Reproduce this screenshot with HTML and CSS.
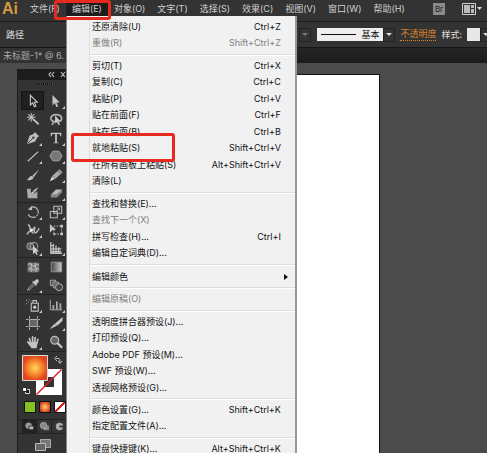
FILE: index.html
```
<!DOCTYPE html>
<html lang="zh-CN">

<head>
    <meta charset="UTF-8">
    <meta name="viewport" content="width=device-width, initial-scale=1.0">
    <title>Ai</title>
    <link rel="stylesheet" href="styles.css">
</head>

<body>
<div class="app">
    <!-- 菜单栏 -->
    <header class="menubar">
        <span class="logo">Ai</span>
        <nav class="nav">
            <button>文件(F)</button>
            <div class="nav_open">
                <button class="active">编辑(E)</button>
                <div class="menu">
                    <ul>
                        <li><button>还原清除(U)<kbd>Ctrl+Z</kbd></button></li>
                        <li><button disabled>重做(R)<kbd>Shift+Ctrl+Z</kbd></button></li>
                    </ul>
                    <ul>
                        <li><button>剪切(T)<kbd>Ctrl+X</kbd></button></li>
                        <li><button>复制(C)<kbd>Ctrl+C</kbd></button></li>
                        <li><button>粘贴(P)<kbd>Ctrl+V</kbd></button></li>
                        <li><button>贴在前面(F)<kbd>Ctrl+F</kbd></button></li>
                        <li><button>贴在后面(B)<kbd>Ctrl+B</kbd></button></li>
                        <li class="marked"><button>就地粘贴(S)<kbd>Shift+Ctrl+V</kbd></button></li>
                        <li><button>在所有画板上粘贴(S)<kbd>Alt+Shift+Ctrl+V</kbd></button></li>
                        <li><button>清除(L)</button></li>
                    </ul>
                    <ul>
                        <li><button>查找和替换(E)...</button></li>
                        <li><button disabled>查找下一个(X)</button></li>
                        <li><button>拼写检查(H)...<kbd>Ctrl+I</kbd></button></li>
                        <li><button>编辑自定词典(D)...</button></li>
                    </ul>
                    <ul>
                        <li><button class="sub">编辑颜色</button></li>
                    </ul>
                    <ul>
                        <li><button disabled>编辑原稿(O)</button></li>
                    </ul>
                    <ul>
                        <li><button>透明度拼合器预设(J)...</button></li>
                        <li><button>打印预设(Q)...</button></li>
                        <li><button>Adobe PDF 预设(M)...</button></li>
                        <li><button>SWF 预设(W)...</button></li>
                        <li><button>透视网格预设(G)...</button></li>
                    </ul>
                    <ul>
                        <li><button>颜色设置(G)...<kbd>Shift+Ctrl+K</kbd></button></li>
                        <li><button>指定配置文件(A)...</button></li>
                    </ul>
                    <ul>
                        <li><button>键盘快捷键(K)...<kbd>Alt+Shift+Ctrl+K</kbd></button></li>
                    </ul>
                </div>
            </div>
            <button>对象(O)</button>
            <button>文字(T)</button>
            <button>选择(S)</button>
            <button>效果(C)</button>
            <button>视图(V)</button>
            <button>窗口(W)</button>
            <button>帮助(H)</button>
        </nav>
        <div class="bar_right">
            <button class="bridge">Br</button>
            <button class="layout" aria-label="排列文档">
                <svg width="20" height="13" viewBox="0 0 20 13"><path fill="none" stroke="#d0d0d0" d="M.5.5h13v11H.5z"/><path fill="#bbb" d="M2 2h6v8H2zM9 2h3v3H9zM9 6h3v4H9z"/><path fill="#ddd" d="M15 4h5l-2.500 3z"/></svg>
            </button>
        </div>
    </header>

    <!-- 控制栏 -->
    <div class="options">
        <span class="path">路径</span>
        <div class="options_right">
            <button class="arrow dim" aria-label="变量宽度"></button>
            <button class="brush"><i></i>基本</button>
            <button class="arrow" aria-label="画笔"></button>
            <a href="#" class="opacity">不透明度</a>
            <span class="style_name">样式:</span>
            <button class="swatch" aria-label="样式"></button>
            <button class="arrow" aria-label="样式列表"></button>
        </div>
    </div>

    <div class="tabs">
        <div class="tab">未标题-1* @ 6.</div>
    </div>

    <main class="canvas">
        <aside class="tools">
            <div class="tools_head">
                <svg width="18" height="7" viewBox="0 0 18 7"><path fill="none" stroke="#bbb" stroke-width="1.200" d="M3 1L1 3.500 3 6M6 1L4 3.500 6 6M13 1l4 5M17 1l-4 5"/></svg>
            </div>
            <div class="grip"></div>
            <div class="group tall">
                <button class="on" aria-label="选择"><svg viewBox="0 0 16 16"><path fill="#222" stroke="#c8c8c8" stroke-width="1.200" d="M5 1.500v11l2.600-2.400 2 4.400 1.800-.8-2-4.200h3.600z"/></svg></button>
                <button class="more" aria-label="直接选择"><svg viewBox="0 0 16 16"><path fill="#c4c4c4" d="M4 1v12l2.700-2.600L8.500 15l2-.9-1.900-4.300h3.700z"/></svg></button>
                <button aria-label="魔棒"><svg viewBox="0 0 16 16"><path fill="none" stroke="#bdbdbd" stroke-width="1.200" d="M6 1v10M1 6h10M2.500 2.500l7 7M9.500 2.500l-7 7"/><path stroke="#bdbdbd" stroke-width="2" d="M8 8l6.500 6"/></svg></button>
                <button aria-label="套索"><svg viewBox="0 0 16 16"><path fill="none" stroke="#b0b0b0" stroke-width="2" d="M9 11C0 12 0 3 8 3s8 7 3 8M4 10c2 1 1 4-1 4"/><path fill="#ccc" d="M7 4v9l2-2 2 4 1.500-1-2-3.500H13z"/></svg></button>
                <button class="more" aria-label="钢笔"><svg viewBox="0 0 16 16"><path fill="#bdbdbd" d="M10 1l5 5-2 1-2.500 5L1 15l3-9.500L9 3z"/><path stroke="#333" d="M1.500 14.500L8 8"/><circle cx="8.500" cy="7.500" r="1.300" fill="#333"/></svg></button>
                <button class="more" aria-label="文字"><svg viewBox="0 0 16 16"><path fill="#c4c4c4" d="M2 2h12v4h-1l-1-2.500H9V13l2 .5V14H5v-.5l2-.5V3.500H4L3 6H2z"/></svg></button>
                <button class="more" aria-label="直线段"><svg viewBox="0 0 16 16"><path stroke="#c4c4c4" stroke-width="1.300" d="M2 14L14 3"/></svg></button>
                <button class="more" aria-label="多边形"><svg viewBox="0 0 16 16"><path fill="#777" stroke="#aaa" d="M4.500 2.500h7L15 8l-3.500 5.500h-7L1 8z"/></svg></button>
                <button aria-label="画笔"><svg viewBox="0 0 16 16"><path fill="#bdbdbd" d="M15 1.500L9 10.500 7 9zM6.500 9l2.300 1.900C7 14.500 4 14 .5 14c2-.5 2.500-4.500 6-5z"/></svg></button>
                <button class="more" aria-label="铅笔"><svg viewBox="0 0 16 16"><path fill="#aaa" d="M12 1.500L15.500 5 7 12.500 3.500 9z"/><path fill="#ddd" d="M3.500 9.500l3 3L1 15z"/><path stroke="#444" d="M10.500 3l3.500 3.500"/></svg></button>
                <button aria-label="斑点画笔"><svg viewBox="0 0 16 16"><path fill="#aaa" d="M1 3h5c-2 3 0 6 4 5l3-2v8H2z"/><path fill="#ccc" d="M14.500 1L10 7 8 5.500zM7.500 6l2 1.500C8 9 7 8.500 5.500 9z"/></svg></button>
                <button class="more" aria-label="橡皮擦"><svg viewBox="0 0 16 16"><path fill="#bbb" d="M8 4h7l-6 6H2z"/><path fill="#888" d="M2 10h7v3H2zM9 10l6-6v3l-6 6z"/></svg></button>
            </div>
            <div class="group">
                <button class="more" aria-label="旋转"><svg viewBox="0 0 16 16"><path fill="none" stroke="#bdbdbd" stroke-width="1.300" stroke-dasharray="14 1 2 1" d="M5 3a6 6 0 1 1-2.500 7.500"/><path fill="#bdbdbd" d="M2 5l5-4v5z"/></svg></button>
                <button class="more" aria-label="缩放"><svg viewBox="0 0 16 16"><path fill="none" stroke="#bdbdbd" stroke-width="1.200" d="M5.500 1.500h9v8h-9zM1.500 7.500h8v7h-8z"/><path stroke="#bdbdbd" fill="none" d="M7 8l5-4M9 3.500h3v3"/></svg></button>
                <button class="more" aria-label="宽度"><svg viewBox="0 0 16 16"><path fill="none" stroke="#b4b4b4" stroke-width="1.800" d="M2 2c4 0 1 5 4 6s3-4 4-3-2 5 0 6 4-3 5-5M1 13c3-5 6-4 7-1"/><circle cx="6" cy="8" r="1.800" fill="#eee"/></svg></button>
                <button aria-label="自由变换"><svg viewBox="0 0 16 16"><path fill="none" stroke="#bdbdbd" stroke-dasharray="2 1" d="M5.500 3.500h9v9h-9z"/><path fill="#c4c4c4" d="M1 1v10l3-3h4zM13 2h3v3h-3zM13 11h3v3h-3zM5 12h2v2H5z"/></svg></button>
                <button class="more" aria-label="形状生成器"><svg viewBox="0 0 16 16"><circle cx="5" cy="6" r="4" fill="#555" stroke="#b4b4b4"/><circle cx="9" cy="6" r="4.500" fill="none" stroke="#b4b4b4"/><path fill="#ccc" d="M8 5v10l2.300-2 1.500 3 1.500-1-1.500-3H15z"/></svg></button>
                <button class="more" aria-label="透视网格"><svg viewBox="0 0 16 16"><path fill="none" stroke="#bdbdbd" stroke-width="1.500" d="M2 1v13h13M5 3v11M8 5v9M11 7v7M2 5l4 1M2 9h12M2 12h12"/></svg></button>
            </div>
            <div class="group">
                <button aria-label="网格"><svg viewBox="0 0 16 16"><path fill="#777" d="M2 3h13v11H2z"/><path fill="none" stroke="#ccc" d="M2 5c4-3 5 4 8 2s3-3 5-1M2 11c3-4 6 2 8 0s3-2 5 0M5 3c4 3-2 8 2 11M11 3c-3 4 3 7 0 11"/></svg></button>
                <button aria-label="渐变"><svg viewBox="0 0 16 16"><defs><linearGradient id="gray"><stop stop-color="#444"/><stop offset="1" stop-color="#ccc"/></linearGradient></defs><path fill="url(#gray)" stroke="#999" d="M2.500 2.500h12v11h-12z"/></svg></button>
                <button class="more" aria-label="吸管"><svg viewBox="0 0 16 16"><path fill="#c4c4c4" d="M11 2c2-2 5 1 3 3l-2 2 .5 1-1 1L7 4.500l1-1 1 .5z"/><path fill="none" stroke="#bdbdbd" d="M8.500 6L3 11.500 2 14l2.500-1L10 7.500"/></svg></button>
                <button aria-label="混合"><svg viewBox="0 0 16 16"><path fill="#555" stroke="#aaa" d="M1.500 2.500h6v6h-6z"/><rect x="4.500" y="4.500" width="7" height="7" rx="2" fill="#666" stroke="#aaa"/><circle cx="11.500" cy="10.500" r="4" fill="#444" stroke="#bbb"/></svg></button>
            </div>
            <div class="group tall">
                <button class="more" aria-label="符号喷枪"><svg viewBox="0 0 16 16"><path fill="none" stroke="#bdbdbd" stroke-width="1.300" d="M6 6h8v9H6zM8 6V3h4v3"/><circle cx="10" cy="10.500" r="1.800" fill="#ccc"/><path fill="#bbb" d="M0 2h1v1H0zM3 1h1v1H3zM2 4h1v1H2zM5 3h1v1H5zM0 6h1v1H0z"/></svg></button>
                <button class="more" aria-label="柱形图"><svg viewBox="0 0 16 16"><path fill="none" stroke="#bdbdbd" d="M1.500 2v11.500H15"/><path fill="#aaa" d="M4 8h2v5H4zM8 4h2v9H8zM12 6h2v7h-2z"/></svg></button>
                <button aria-label="画板"><svg viewBox="0 0 16 16"><path fill="#666" d="M4 4h9v8H4z"/><path fill="none" stroke="#bdbdbd" d="M4 4h9v8H4zM4 0v3M13 0v3M4 13v3M13 13v3M0 4h3M14 4h2M0 12h3M14 12h2"/></svg></button>
                <button class="more" aria-label="切片"><svg viewBox="0 0 16 16"><path fill="#c4c4c4" d="M15.500 1v4.500L9.500 11 7 8.500zM6.500 8.500l2.500 2.500L.5 15z"/></svg></button>
                <button class="more" aria-label="抓手"><svg viewBox="0 0 16 16"><path fill="none" stroke="#c4c4c4" stroke-width="1.900" stroke-linecap="round" d="M5 9L4 4M7.500 8V2M10 8l.5-5M12.500 9l1-4M5 12L2 8"/><path fill="#c4c4c4" d="M4 8h9.500L12 15H6z"/></svg></button>
                <button aria-label="缩放镜"><svg viewBox="0 0 16 16"><circle cx="6.500" cy="6" r="4.500" fill="#666" stroke="#bbb" stroke-width="1.500"/><path stroke="#c4c4c4" stroke-width="2.500" d="M9.500 9l5.500 5.500"/></svg></button>
            </div>
            <div class="paint">
                <svg width="46" height="42" viewBox="0 0 46 42">
                    <defs>
                        <radialGradient id="fill"><stop stop-color="#ffd75e"/><stop offset=".55" stop-color="#f58a2c"/><stop offset="1" stop-color="#e3431d"/></radialGradient>
                    </defs>
                    <path fill="#fff" fill-rule="evenodd" d="M14 14h26v26H14zM22 22v10h10V22z"/>
                    <path stroke="#d8202a" stroke-width="1.500" d="M14.500 39.500l25-25"/>
                    <path fill="url(#fill)" stroke="#ddd" d="M.5.5h25v25H.5z"/>
                    <path fill="none" stroke="#bbb" d="M34 3.500h3q1 0 1 4M35 1l-2.500 2.500L35 6M36 6l2 2.500L40 6"/>
                    <path fill="#111" stroke="#ddd" d="M3.500 34.500h4v4h-4z"/><path fill="#fff" stroke="#222" d="M.5 32.500h4v4h-4z"/>
                </svg>
            </div>
            <div class="modes">
                <button class="color" aria-label="颜色"></button>
                <button class="gradient" aria-label="渐变"></button>
                <button class="none" aria-label="无"></button>
            </div>
            <div class="draws">
                <button class="on" aria-label="正常绘图"><svg viewBox="0 0 12 12"><circle cx="5" cy="5" r="3.500" fill="#999"/><path fill="#bbb" stroke="#333" d="M5.500 5.500h5v4h-5z"/></svg></button>
                <button aria-label="背面绘图"><svg viewBox="0 0 12 12"><path fill="#888" d="M5 5h6v5H5z"/><circle cx="5" cy="5" r="3.500" fill="#888" stroke="#aaa"/></svg></button>
                <button aria-label="内部绘图"><svg viewBox="0 0 12 12"><circle cx="6" cy="6" r="4" fill="#aaa"/><path fill="#333" d="M6 5h4v2H6z"/></svg></button>
            </div>
            <button class="screen" aria-label="更改屏幕模式">
                <svg width="18" height="14" viewBox="0 0 18 14"><path fill="#777" stroke="#aaa" d="M6.500 1.500h10v8h-10z"/><path fill="#666" stroke="#bbb" d="M1.500 5.500h10v7h-10z"/></svg>
            </button>
        </aside>
        <div class="artboard"></div>
    </main>
</div>
</body>

</html>
```
FILE: styles.css
```
*,
*::before,
*::after {
    margin: 0;
    padding: 0;
    box-sizing: border-box;
}

body {
    font-family: Inter, "Noto Sans CJK SC", sans-serif;
    font-size: 9px;
    color: #d0d0d0;
    background: #4b4b4b;
}

button {
    font: inherit;
    color: inherit;
    background: none;
    border: none;
    white-space: nowrap;
}

ul {
    list-style: none;
}

.app {
    height: 100vh;
    display: flex;
    flex-direction: column;
    overflow: hidden;
}

/* 菜单栏 */
.menubar {
    height: 22px;
    flex-shrink: 0;
    display: flex;
    align-items: flex-start;
    background: #333;
    border-bottom: 1px solid #1c1c1c;
}

.logo {
    width: 24px;
    flex-shrink: 0;
    line-height: 17px;
    font-family: "Liberation Sans", sans-serif;
    font-size: 16px;
    font-weight: bold;
    color: #d29a3c;
    padding-left: 2px;
}

.nav {
    display: flex;
}

.nav button {
    line-height: 18px;
    padding: 0 6px;
}

.nav_open {
    position: relative;
}

.nav .active {
    background: #1d1d1d;
}

.nav_open::after {
    content: "";
    position: absolute;
    z-index: 3;
    left: -12px;
    right: -3px;
    top: 0;
    height: 20px;
    border: 3px solid #e8291f;
    border-radius: 3px;
}

.bar_right {
    margin-left: auto;
    flex-shrink: 0;
    display: flex;
    align-items: center;
    gap: 17px;
    height: 18px;
    padding-right: 5px;
}

.bridge {
    width: 12px;
    height: 12px;
    line-height: 12px;
    font-size: 8px;
    color: #222;
    background: #8a8a8a;
}

.layout svg {
    display: block;
}

/* 下拉菜单 */
.menu {
    position: absolute;
    z-index: 2;
    left: 0;
    top: 16px;
    width: 231px;
    height: calc(100vh - 16px);
    overflow: hidden;
    padding-top: 3px;
    color: #111;
    background: linear-gradient(90deg, #f1f1f1 22px, #ddd 22px, #ddd 23px, #f1f1f1 23px);
    border-left: 1px solid #888;
    border-right: 2px solid #979797;
}

.menu ul + ul::before {
    content: "";
    display: block;
    height: 2px;
    margin: 2px 0 2px 23px;
    background: linear-gradient(#ddd 50%, #fff 50%);
}

.menu li {
    height: 16px;
    position: relative;
}

.menu li:nth-child(even),
.menu li:only-child {
    height: 17px;
}

.menu button {
    width: 100%;
    height: 100%;
    line-height: 16px;
    display: flex;
    justify-content: space-between;
    padding: 0 14px 0 25px;
}

.menu button:disabled {
    color: #808080;
}

.menu kbd {
    font: inherit;
}

.menu .sub {
    align-items: center;
    padding-right: 7px;
}

.menu .sub::after {
    content: "";
    border: 3px solid transparent;
    border-left: 4px solid #111;
    border-right: none;
}

.marked::after {
    content: "";
    position: absolute;
    z-index: 3;
    left: 4px;
    top: -7px;
    width: 104px;
    height: 29px;
    border: 3px solid #e8291f;
    border-radius: 3px;
}

/* 控制栏 */
.options {
    height: 26px;
    flex-shrink: 0;
    display: flex;
    align-items: center;
    justify-content: space-between;
    padding-left: 6px;
    background: #333;
    border-bottom: 1px solid #161616;
}

/* 最后一个箭头伸出窗口 */
.options_right {
    display: flex;
    align-items: center;
    margin-right: -5px;
}

.path,
.style_name {
    color: #e0e0e0;
}

.arrow {
    width: 12px;
    height: 14px;
    display: flex;
    align-items: center;
    justify-content: center;
    border: 1px solid #222;
}

.arrow::after {
    content: "";
    border: 3px solid transparent;
    border-top: 3px solid #ddd;
    border-bottom: none;
}

.dim {
    margin-right: 6px;
}

.dim::after {
    border-top-color: #777;
}

.brush {
    width: 66px;
    height: 13px;
    display: flex;
    align-items: center;
    justify-content: space-between;
    padding: 0 4px;
    color: #111;
    background: #eee;
}

.brush i {
    width: 35px;
    height: 1px;
    background: #111;
}

.opacity {
    margin: 0 5px;
    line-height: 12px;
    color: #d6812f;
    text-decoration: none;
    border-bottom: 1px dotted #d6812f;
}

.swatch {
    width: 13px;
    height: 13px;
    margin-left: 5px;
    background: #e8e8e8;
}

/* 文档标签 */
.tabs {
    height: 15px;
    flex-shrink: 0;
    background: linear-gradient(#262626, #1b1b1b);
}

.tab {
    width: 90px;
    height: 15px;
    line-height: 16px;
    padding-left: 3px;
    color: #aaa;
    background: #333;
}

/* 画布 */
.canvas {
    flex: 1;
    min-height: 0;
    display: flex;
    overflow: hidden;
    background: #4b4b4b;
}

.artboard {
    width: 214px;
    margin: 11px 0 0 95px;
    background: #fff;
    border: 1px solid #111;
    border-bottom: none;
}

/* 工具面板 */
.tools {
    width: 54px;
    flex-shrink: 0;
    margin: 6px 0 0 17px;
    background: #333;
    border-left: 1px solid #1c1c1c;
}

.tools_head {
    height: 11px;
    display: flex;
    align-items: center;
    padding-left: 30px;
    background: #1c1c1c;
}

.grip {
    width: 16px;
    height: 2px;
    margin: 3px auto 6px;
    background: repeating-linear-gradient(90deg, #111 0, #111 1px, #444 1px, #444 2px);
}

.group {
    display: grid;
    grid-template-columns: 23px 23px;
    grid-auto-rows: 18px;
    padding-left: 3px;
    border-bottom: 1px solid #222;
}

.tall {
    grid-auto-rows: 19px 18px;
}

.group button {
    display: flex;
    align-items: center;
    justify-content: center;
    position: relative;
}

.group svg {
    width: 14px;
    height: 14px;
}

.group .on {
    background: #202020;
    border: 1px solid #151515;
}

.more::after {
    content: "";
    position: absolute;
    right: 2px;
    bottom: 1px;
    border-left: 3px solid transparent;
    border-bottom: 3px solid #ccc;
}

.paint {
    height: 46px;
    padding: 3px 0 0 4px;
}

.paint svg {
    display: block;
}

.modes {
    display: flex;
    gap: 3px;
    padding: 3px 0 0 6px;
}

.modes button {
    width: 12px;
    height: 12px;
    border: 1px solid #111;
}

.color {
    background: #86c023;
}

.gradient {
    background: radial-gradient(#ffd36a, #e8622a 60%, #7a1d0c);
}

.modes .none {
    background: linear-gradient(to bottom right, #fff 42%, #d8202a 42%, #d8202a 58%, #fff 58%);
}

.draws {
    display: flex;
    margin-top: 6px;
    border-top: 1px solid #222;
    border-bottom: 1px solid #222;
    padding-left: 4px;
}

.draws button {
    width: 15px;
    height: 13px;
    border-right: 1px solid #222;
}

.draws svg {
    display: block;
    width: 11px;
    height: 11px;
    margin: 0 auto;
}

.draws .on {
    background: #222;
}

.screen {
    display: block;
    margin: 4px 0 0 16px;
}
```
